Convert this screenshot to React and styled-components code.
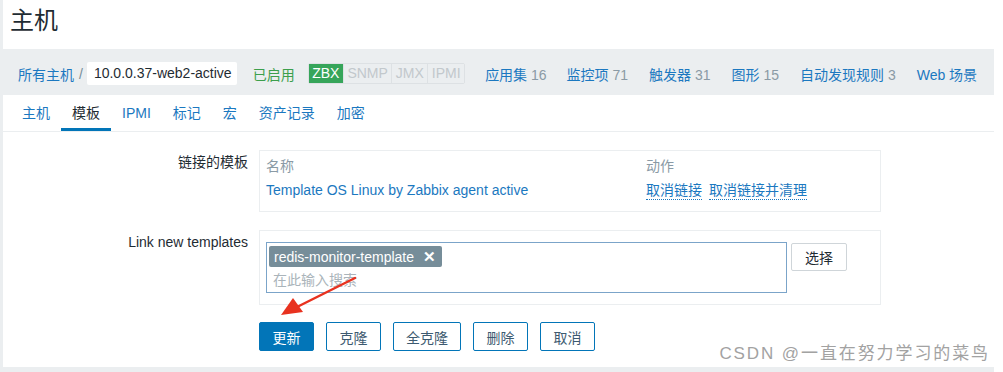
import React from "react";
import styled, { createGlobalStyle, css } from "styled-components";

const GlobalStyle = createGlobalStyle`
  html, body { margin: 0; padding: 0; background: #fff; }
  body {
    font-family: "Liberation Sans", Arial, "Noto Sans CJK SC", sans-serif;
    font-size: 14px;
    color: #1f2c33;
  }
`;

const Page = styled.div`
  position: relative;
  width: 991px;
  height: 372px;
  border-left: 3px solid #ebeef0;
  overflow: hidden;
`;

const Header = styled.header`
  height: 49px;
  padding-left: 7px;
`;

const Title = styled.h1`
  margin: 0;
  font-size: 24px;
  font-weight: normal;
  line-height: 42px;
  color: #1f2c33;
`;

const Body = styled.div`
  background: #ebeef0;
  padding-bottom: 5px;
`;

const NavBar = styled.nav`
  height: 46px;
  display: flex;
  align-items: center;
  padding-left: 15px;
  padding-top: 3px;
  box-sizing: border-box;
`;

const Link = styled.a`
  color: #1b78c0;
  text-decoration: none;
  white-space: nowrap;
`;

const Sep = styled.span`
  color: #768d99;
  margin: 0 4px 0 5px;
`;

const HostBox = styled.span`
  background: #fff;
  height: 23px;
  line-height: 23px;
  padding: 0 5px 0 7px;
  border-radius: 2px;
`;

const Status = styled.span`
  color: #3c9f4c;
  margin: 0 13px 0 16px;
`;

const BadgeGroup = styled.span`
  display: flex;
  border: 1px solid #dde1e4;
  border-radius: 2px;
  margin-right: 20px;
`;

const Badge = styled.span`
  height: 19px;
  line-height: 19px;
  padding: 0 3.5px;
  font-size: 14px;
  color: ${({ $on }) => ($on ? "#fff" : "#c2c8cc")};
  background: ${({ $on }) => ($on ? "#36a55a" : "#ebeef0")};
  & + & { border-left: 1px solid #dde1e4; }
`;

const NavItem = styled.span`
  margin-right: ${({ $mr }) => $mr}px;
  white-space: nowrap;
`;

const Count = styled.span`
  color: #8a9aa5;
`;

const Panel = styled.div`
  background: #fff;
  height: 272px;
`;

const Tabs = styled.ul`
  display: flex;
  list-style: none;
  margin: 0;
  padding: 0 0 0 8px;
  border-bottom: 1px solid #ebeef0;
`;

const Tab = styled.li`
  height: 36px;
  line-height: 36px;
  padding: 0 11px;
  box-sizing: border-box;
  color: ${({ $active }) => ($active ? "#1f2c33" : "#1b78c0")};
  border-bottom: 3px solid ${({ $active }) => ($active ? "#0275b8" : "transparent")};
`;

const Form = styled.div`
  padding-top: 18px;
`;

const Row = styled.div`
  display: grid;
  grid-template-columns: 245px 622px;
  column-gap: 11px;
  margin-bottom: 18px;
`;

const Label = styled.div`
  text-align: right;
  padding-top: ${({ $pt }) => $pt}px;
  white-space: nowrap;
`;

const Box = styled.div`
  border: 1px solid #ebeef0;
  box-sizing: border-box;
  ${({ $pad }) => css`padding: ${$pad};`}
`;

const Table = styled.div`
  display: grid;
  grid-template-columns: 380px auto;
  line-height: 24px;
`;

const Th = styled.div`
  color: #8a9aa5;
`;

const Actions = styled.div`
  display: flex;
  gap: 7px;
`;

const DotLink = styled(Link)`
  border-bottom: 1px dotted #1b78c0;
  line-height: 18px;
  align-self: center;
`;

const SelectRow = styled.div`
  display: flex;
  align-items: flex-start;
  gap: 4px;
`;

const Multi = styled.div`
  width: 521px;
  height: 51px;
  box-sizing: border-box;
  border: 1px solid #7ba4c9;
  padding: 3px 2px;
`;

const Tag = styled.span`
  display: inline-flex;
  align-items: center;
  height: 21px;
  padding: 0 6px 0 5px;
  border-radius: 2px;
  background: #768d99;
  color: #fff;
`;

const TagX = styled.span`
  margin-left: 9px;
  font-weight: bold;
  font-size: 15px;
`;

const Placeholder = styled.div`
  color: #aab4ba;
  padding-left: 4px;
  margin-top: 3px;
  line-height: 20px;
`;

const SelectBtn = styled.button`
  width: 56px;
  height: 28px;
  margin-top: 1px;
  background: #fff;
  border: 1px solid #cfd5d9;
  border-radius: 2px;
  font: inherit;
  color: #1f2c33;
`;

const Buttons = styled.div`
  display: flex;
  gap: 12px;
  margin-left: 256px;
  margin-top: -1px;
`;

const Button = styled.button`
  height: 29px;
  padding: 0;
  width: ${({ $w }) => $w}px;
  font: inherit;
  border-radius: 2px;
  border: 1px solid #0275b8;
  background: ${({ $primary }) => ($primary ? "#0275b8" : "#fff")};
  color: ${({ $primary }) => ($primary ? "#fff" : "#3d5a70")};
`;

const Watermark = styled.div`
  position: absolute;
  right: 4px;
  bottom: 8px;
  font-size: 17px;
  letter-spacing: 1.9px;
  color: #a2a2a2;
  font-family: "Liberation Sans", Arial, "Noto Sans CJK SC", sans-serif;
`;

const Arrow = styled.svg`
  position: absolute;
  left: 274px;
  top: 274px;
`;

const tabs = ["主机", "模板", "IPMI", "标记", "宏", "资产记录", "加密"];
const navItems = [
  ["应用集", "16", 20],
  ["监控项", "71", 21],
  ["触发器", "31", 21],
  ["图形", "15", 21],
  ["自动发现规则", "3", 21],
  ["Web 场景", null, 0],
];
const buttons = [["更新", 55, true], ["克隆", 55], ["全克隆", 68], ["删除", 55], ["取消", 55]];

export default function App() {
  return (
    <Page>
      <GlobalStyle />
      <Header>
        <Title>主机</Title>
      </Header>
      <Body>
        <NavBar>
          <Link>所有主机</Link>
          <Sep>/</Sep>
          <HostBox>10.0.0.37-web2-active</HostBox>
          <Status>已启用</Status>
          <BadgeGroup>
            <Badge $on>ZBX</Badge>
            <Badge>SNMP</Badge>
            <Badge>JMX</Badge>
            <Badge>IPMI</Badge>
          </BadgeGroup>
          {navItems.map(([name, n, mr]) => (
            <NavItem key={name} $mr={mr}>
              <Link>{name}</Link>
              {n && <Count> {n}</Count>}
            </NavItem>
          ))}
        </NavBar>
        <Panel>
          <Tabs>
            {tabs.map((t) => (
              <Tab key={t} $active={t === "模板"}>{t}</Tab>
            ))}
          </Tabs>
          <Form>
            <Row>
              <Label $pt={1}>链接的模板</Label>
              <Box $pad="3px 6px 9px">
                <Table>
                  <Th>名称</Th>
                  <Th>动作</Th>
                  <Link>Template OS Linux by Zabbix agent active</Link>
                  <Actions>
                    <DotLink>取消链接</DotLink>
                    <DotLink>取消链接并清理</DotLink>
                  </Actions>
                </Table>
              </Box>
            </Row>
            <Row>
              <Label $pt={4}>Link new templates</Label>
              <Box $pad="11px 6px 11px">
                <SelectRow>
                  <Multi>
                    <Tag>
                      redis-monitor-template<TagX>✕</TagX>
                    </Tag>
                    <Placeholder>在此输入搜索</Placeholder>
                  </Multi>
                  <SelectBtn>选择</SelectBtn>
                </SelectRow>
              </Box>
            </Row>
            <Buttons>
              {buttons.map(([t, w, p]) => (
                <Button key={t} $w={w} $primary={p}>{t}</Button>
              ))}
            </Buttons>
          </Form>
        </Panel>
      </Body>
      <Arrow width="84" height="46" viewBox="0 0 84 46">
        <path d="M78 4 L20 33" stroke="#e8321f" strokeWidth="2.5" strokeLinecap="round" />
        <path d="M4 41 L16 24 L26 38 Z" fill="#e8321f" />
      </Arrow>
      <Watermark>CSDN @一直在努力学习的菜鸟</Watermark>
    </Page>
  );
}
